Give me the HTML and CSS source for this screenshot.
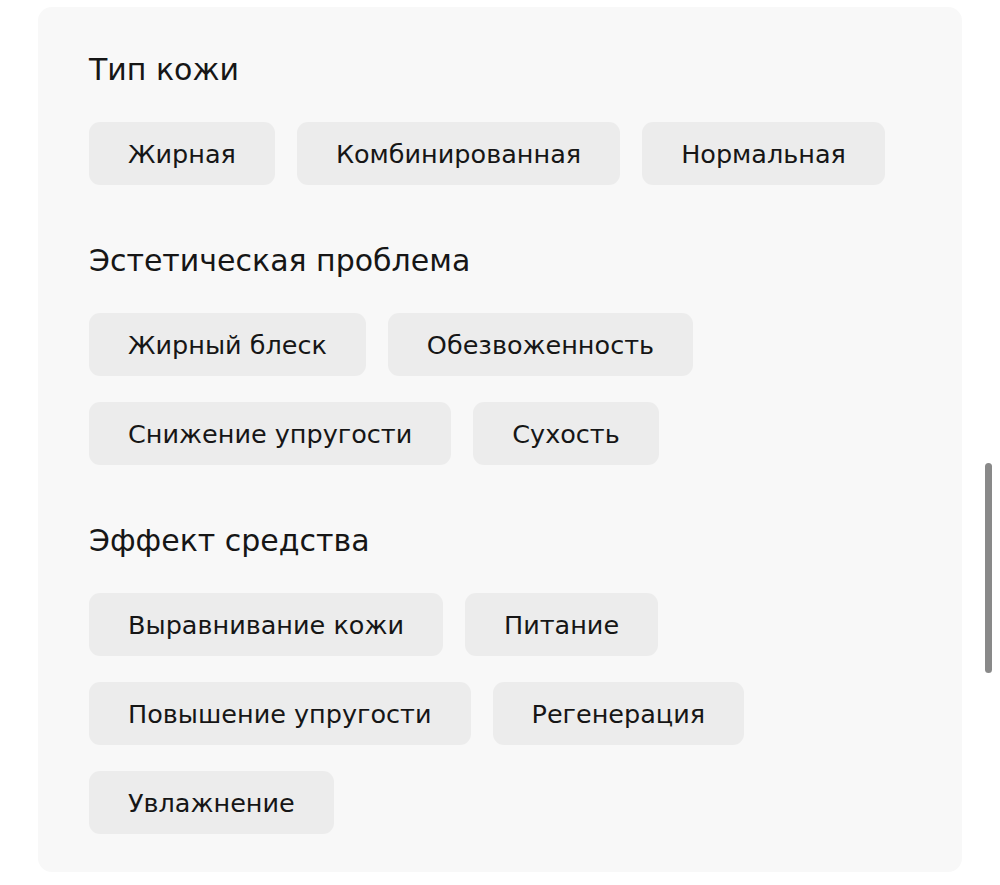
FILE: index.html
```html
<!DOCTYPE html>
<html lang="ru">
<head>
<meta charset="utf-8">
<link rel="stylesheet" href="styles.css">
</head>
<body>
<div class="card">
  <section class="group">
    <h2 class="title">Тип кожи</h2>
    <div class="chips">
      <span class="chip">Жирная</span>
      <span class="chip">Комбинированная</span>
      <span class="chip">Нормальная</span>
    </div>
  </section>
  <section class="group">
    <h2 class="title">Эстетическая проблема</h2>
    <div class="chips">
      <span class="chip">Жирный блеск</span>
      <span class="chip">Обезвоженность</span>
      <span class="chip">Снижение упругости</span>
      <span class="chip">Сухость</span>
    </div>
  </section>
  <section class="group">
    <h2 class="title">Эффект средства</h2>
    <div class="chips">
      <span class="chip">Выравнивание кожи</span>
      <span class="chip">Питание</span>
      <span class="chip">Повышение упругости</span>
      <span class="chip">Регенерация</span>
      <span class="chip">Увлажнение</span>
    </div>
  </section>
</div>
<div class="scrollbar"></div>
</body>
</html>
```
FILE: styles.css
```css
html, body {
  margin: 0;
  padding: 0;
  background: #ffffff;
}
body {
  font-family: "DejaVu Sans", sans-serif;
  color: #161616;
  padding: 7px 38px 13px 38px;
  width: 924px;
}
.card {
  background: #f8f8f8;
  border-radius: 14px;
  padding: 45px 51px 38px 51px;
  display: flex;
  flex-direction: column;
  gap: 58px;
}
.group {
  display: flex;
  flex-direction: column;
  gap: 34px;
}
.title {
  margin: 0;
  font-weight: 400;
  font-size: 30px;
  line-height: 36px;
}
.chips {
  display: flex;
  flex-wrap: wrap;
  column-gap: 22px;
  row-gap: 26px;
  max-width: 810px;
}
.chip {
  background: #ececec;
  border-radius: 11px;
  height: 63px;
  padding: 0 39px;
  display: flex;
  align-items: center;
  font-size: 25.5px;
}
.scrollbar {
  position: absolute;
  left: 985px;
  top: 463px;
  width: 7px;
  height: 210px;
  border-radius: 4px;
  background: #898989;
}
```
